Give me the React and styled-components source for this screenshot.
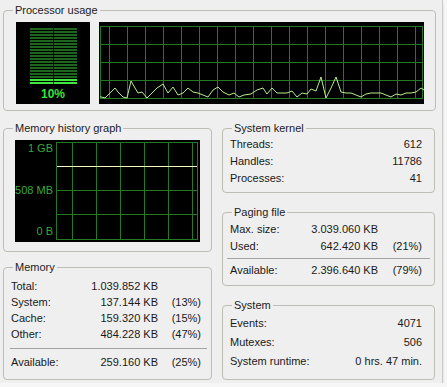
import React from 'react';
import styled, { createGlobalStyle } from 'styled-components';

const GlobalStyle = createGlobalStyle`
  html, body {
    margin: 0;
    padding: 0;
    background: #f6f6f6;
  }
  body {
    font-family: "Liberation Sans", Arial, sans-serif;
    font-size: 11px;
    color: #1a1a1a;
  }
`;

const Window = styled.div`
  box-sizing: border-box;
  width: 443px;
  height: 383px;
  padding: 4px 0 0 3px;
  background: #efefef;
  border-right: 1px solid #c9c9c9;
  box-shadow: 0 3px 2px -1px #3e4862;
`;

const Group = styled.fieldset`
  box-sizing: border-box;
  margin: 0;
  padding: 0;
  min-width: 0;
  width: ${({ $w }) => $w}px;
  height: ${({ $h }) => $h}px;
  border: 1px solid #bdbdb4;
  border-radius: 4px;
`;

const Legend = styled.legend`
  margin-left: 9px;
  padding: 0 2px;
  line-height: 13px;
  font-size: 11px;
  color: #222;
`;

const Body = styled.div`
  padding: ${({ $pad }) => $pad};
`;

const ProcessorBody = styled(Body)`
  display: flex;
  gap: 9px;
`;

const Meter = styled.div`
  width: 74px;
  height: 82px;
  background: #000;
  display: flex;
  flex-direction: column;
  align-items: center;
`;

const Bars = styled.div`
  margin-top: 6px;
  display: flex;
  flex-direction: column;
  gap: 1px;
`;

const BarRow = styled.div`
  display: flex;
  gap: 1px;
`;

const BarCell = styled.div`
  width: 23px;
  height: 2px;
  background: ${({ $lit }) => ($lit ? '#3ee83e' : '#1d661d')};
`;

const MeterValue = styled.div`
  margin-top: 4px;
  line-height: 13px;
  font-size: 12px;
  font-weight: bold;
  color: #3be03b;
`;

const CpuGraph = styled.svg`
  display: block;
  background: #000;
`;

const Lower = styled.div`
  display: flex;
  gap: 10px;
  margin-top: 11px;
`;

const Column = styled.div`
  display: flex;
  flex-direction: column;
  justify-content: space-between;
  height: 258px;
`;

const MemGraph = styled.div`
  width: 185px;
  height: 102px;
  background: #000;
  display: flex;
`;

const AxisLabels = styled.div`
  box-sizing: border-box;
  width: 38px;
  height: 102px;
  padding: 2px 0 4px;
  display: flex;
  flex-direction: column;
  justify-content: space-between;
  text-align: right;
  line-height: 13px;
  color: #3aa83a;
`;

const MemGrid = styled.svg`
  display: block;
  margin: 2px 0 0 3px;
`;

const Row = styled.div`
  display: grid;
  grid-template-columns: ${({ $pct }) => ($pct ? `1fr auto ${$pct}px` : '1fr auto')};
  height: ${({ $h }) => $h}px;
  line-height: ${({ $h }) => $h}px;
  white-space: nowrap;
`;

const Value = styled.span`
  text-align: right;
`;

const Separator = styled.div`
  height: 1px;
  background: #a3a3a3;
  margin: ${({ $m }) => $m};
`;

const cpuPoints = [
  [100, 96.7], [105, 98], [110, 93], [115, 88], [118, 92], [123, 97], [127, 98],
  [131, 81], [135, 88], [138, 93], [142, 92], [147, 98], [152, 93], [157, 88],
  [163, 84], [168, 93], [173, 87], [178, 95], [183, 93], [188, 88], [193, 92],
  [198, 93], [203, 95], [208, 97], [213, 90], [218, 87], [223, 92], [229, 95],
  [234, 93], [239, 97], [244, 95], [251, 94], [257, 90], [263, 88], [267, 94],
  [272, 88], [277, 93], [287, 93], [292, 91], [297, 97], [302, 93], [307, 94],
  [311, 89], [316, 91], [321, 77], [326, 98], [331, 88], [336, 77], [341, 92],
  [346, 93], [351, 93], [356, 95], [361, 97], [366, 94], [371, 93], [376, 93],
  [381, 93], [386, 95], [391, 97], [396, 94], [401, 95], [406, 93], [411, 93],
  [416, 92], [421, 88], [424, 90],
];

const memory = [
  ['Total:', '1.039.852 KB', ''],
  ['System:', '137.144 KB', '(13%)'],
  ['Cache:', '159.320 KB', '(15%)'],
  ['Other:', '484.228 KB', '(47%)'],
];

const kernel = [
  ['Threads:', '612'],
  ['Handles:', '11786'],
  ['Processes:', '41'],
];

const system = [
  ['Events:', '4071'],
  ['Mutexes:', '506'],
  ['System runtime:', '0 hrs. 47 min.'],
];

function StatRows({ rows, h, pct }) {
  return rows.map(([label, value, extra]) => (
    <Row key={label} $h={h} $pct={pct}>
      <span>{label}</span>
      <Value>{value}</Value>
      {pct ? <Value>{extra}</Value> : null}
    </Row>
  ));
}

function CpuMeter() {
  const total = 19;
  const lit = 2;
  return (
    <Meter>
      <Bars>
        {Array.from({ length: total }, (_, i) => (
          <BarRow key={i}>
            <BarCell $lit={i >= total - lit} />
            <BarCell $lit={i >= total - lit} />
          </BarRow>
        ))}
      </Bars>
      <MeterValue>10%</MeterValue>
    </Meter>
  );
}

function CpuHistory() {
  const verticals = [];
  for (let x = 10.5; x < 324; x += 18) verticals.push(x);
  const horizontals = [4.5, 22.5, 40.5, 58.5, 76.5];
  const pts = cpuPoints.map(([x, y]) => `${x - 99},${y - 22}`).join(' ');
  return (
    <CpuGraph width="325" height="82" viewBox="0 0 325 82">
      <g stroke="#237a23" strokeWidth="1" shapeRendering="crispEdges">
        <line x1="1.5" y1="4" x2="1.5" y2="77" />
        <line x1="323.5" y1="4" x2="323.5" y2="77" />
        {verticals.map((x) => <line key={x} x1={x} y1="4" x2={x} y2="77" />)}
        {horizontals.map((y) => <line key={y} x1="1" y1={y} x2="324" y2={y} />)}
      </g>
      <polyline points={pts} fill="none" stroke="#b4ee88" strokeWidth="1" />
    </CpuGraph>
  );
}

function MemoryHistory() {
  return (
    <MemGraph>
      <AxisLabels>
        <span>1 GB</span>
        <span>508 MB</span>
        <span>0 B</span>
      </AxisLabels>
      <MemGrid width="142" height="98" viewBox="0 0 142 98">
        <g stroke="#237a23" strokeWidth="1" shapeRendering="crispEdges" fill="none">
          <rect x="0.5" y="0.5" width="141" height="97" />
          {[16.5, 40.5, 64.5, 88.5, 112.5, 136.5].map((x) => (
            <line key={x} x1={x} y1="0" x2={x} y2="98" />
          ))}
          {[48.5, 72.5].map((y) => <line key={y} x1="0" y1={y} x2="142" y2={y} />)}
        </g>
        <line x1="1" y1="24.5" x2="141" y2="24.5" stroke="#fbf7c8" strokeWidth="1" shapeRendering="crispEdges" />
      </MemGrid>
    </MemGraph>
  );
}

export default function App() {
  return (
    <>
      <GlobalStyle />
      <Window>
        <Group $w={433} $h={107}>
          <Legend>Processor usage</Legend>
          <ProcessorBody $pad="5px 10px 0 12px">
            <CpuMeter />
            <CpuHistory />
          </ProcessorBody>
        </Group>
        <Lower>
          <Column>
            <Group $w={209} $h={130}>
              <Legend>Memory history graph</Legend>
              <Body $pad="5px 0 0 11px">
                <MemoryHistory />
              </Body>
            </Group>
            <Group $w={209} $h={119}>
              <Legend>Memory</Legend>
              <Body $pad="4px 10px 0 7px">
                <StatRows rows={memory} h={16} pct={43} />
                <Separator $m="6px -6px 5px -1px" />
                <StatRows rows={[['Available:', '259.160 KB', '(25%)']]} h={16} pct={43} />
              </Body>
            </Group>
          </Column>
          <Column>
            <Group $w={213} $h={71}>
              <Legend>System kernel</Legend>
              <Body $pad="1px 12px 0 7px">
                <StatRows rows={kernel} h={17} />
              </Body>
            </Group>
            <Group $w={213} $h={80}>
              <Legend>Paging file</Legend>
              <Body $pad="2px 12px 0 7px">
                <StatRows
                  rows={[['Max. size:', '3.039.060 KB', ''], ['Used:', '642.420 KB', '(21%)']]}
                  h={17}
                  pct={44}
                />
                <Separator $m="3px -8px 3px -3px" />
                <StatRows rows={[['Available:', '2.396.640 KB', '(79%)']]} h={17} pct={44} />
              </Body>
            </Group>
            <Group $w={213} $h={81}>
              <Legend>System</Legend>
              <Body $pad="2px 12px 0 7px">
                <StatRows rows={system} h={19} />
              </Body>
            </Group>
          </Column>
        </Lower>
      </Window>
    </>
  );
}
